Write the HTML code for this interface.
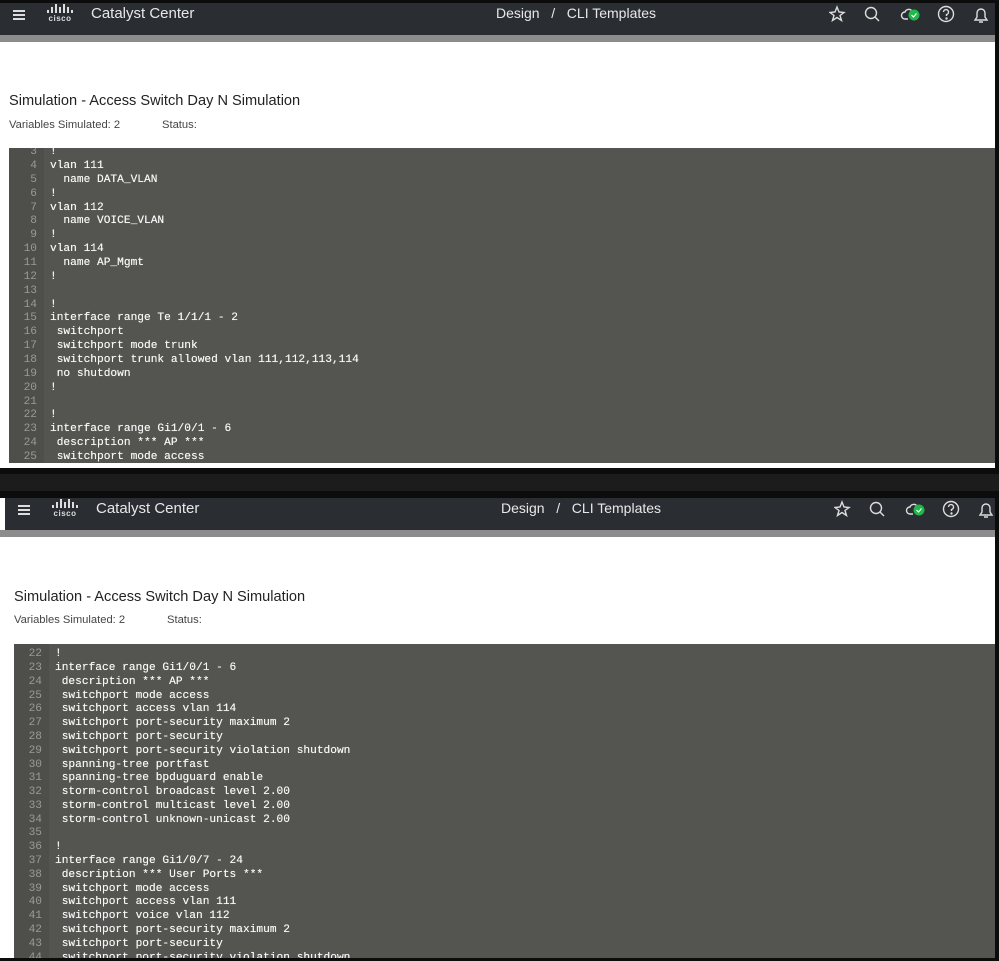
<!DOCTYPE html>
<html><head><meta charset="utf-8"><style>
*{margin:0;padding:0;box-sizing:border-box}
body{width:999px;height:961px;background:#0c0c0c;position:relative;overflow:hidden;font-family:"Liberation Sans",sans-serif}
.panel{position:absolute;background:#fff;overflow:hidden}
.hdr{position:absolute;left:0;right:0;top:0;height:32px;background:#2a2d32;color:#e8e8e8}
.gbar{position:absolute;left:0;right:0;top:32px;height:7px;background:#8c8c8c}
.ham{position:absolute;left:13px;top:7px;width:12px;height:10px;border-top:2px solid #ddd;border-bottom:2px solid #ddd}
.ham:after{content:"";position:absolute;left:0;right:0;top:2px;height:2px;background:#ddd}
.logo{position:absolute;left:45px;top:1px;font-size:8px;font-weight:bold;color:#ddd;text-align:center;width:30px;letter-spacing:.5px}
.logo .bars{display:block;height:10px;position:relative}
.bars i{position:absolute;bottom:1px;width:1.5px;background:#ddd}
.title{position:absolute;left:91px;top:2px;font-size:15px}
.crumb{position:absolute;left:496px;top:2px;font-size:14px}
.h1{position:absolute;font-size:14.6px;color:#222}
.sub{position:absolute;font-size:11.2px;color:#444}
.code{position:absolute;background:#545550;overflow:hidden;font-family:"Liberation Mono",monospace;font-size:11.2px;color:#f6f6f6}
.gut{position:absolute;left:0;top:0;bottom:0;width:35px;background:#4e4f4a}
.ln{position:absolute;left:0;width:100%;height:14px;line-height:14px;white-space:pre;text-shadow:0 0 .4px #fff}
.ln b{font-weight:normal;color:#9a9a96;display:inline-block;width:28px;text-align:right;margin-right:13px;text-shadow:none}
svg{position:absolute}
</style></head><body>

<!-- Panel 1 -->
<div class="panel" style="left:0;top:3px;width:995px;height:465px">
 <div class="hdr"><div class="ham"></div>
  <div class="logo"><span class="bars"><i style="left:2px;height:3px"></i><i style="left:6px;height:6px"></i><i style="left:10px;height:9px"></i><i style="left:14px;height:6px"></i><i style="left:18px;height:9px"></i><i style="left:22px;height:6px"></i><i style="left:26px;height:3px"></i></span>cisco</div>
  <div class="title">Catalyst Center</div>
  <div class="crumb">Design &nbsp;&nbsp;/&nbsp;&nbsp; CLI Templates</div>
  <svg style="left:829px;top:1px" width="160" height="22" viewBox="0 0 160 22" fill="none" stroke="#ddd" stroke-width="1.4">
   <path d="M8 3 L10 8 L15 8.5 L11 11.5 L12.5 16.5 L8 13.5 L3.5 16.5 L5 11.5 L1 8.5 L6 8 Z"/>
   <circle cx="42" cy="9" r="5.5"/><path d="M46 13 L50 17"/>
   <path d="M79 15 H76 a3.5 3.5 0 0 1 0-7 a4 4 0 0 1 7-1"/><circle cx="85" cy="11" r="5.5" fill="#1fb84a" stroke="none"/><path d="M82.5 11 l2 2 l3-3.5" stroke="#fff" stroke-width="1.2"/>
   <circle cx="117" cy="10" r="7.5"/><path d="M114.5 8 a2.5 2.5 0 1 1 3 2.5 v1.5"/><circle cx="117.5" cy="14.5" r=".5" fill="#ddd"/>
   <path d="M146 16 h12 l-2-3 v-4 a4 4 0 0 0-8 0 v4 z M150 18 h4"/>
  </svg>
 </div><div class="gbar"></div>
 <div class="h1" style="left:9px;top:90px">Simulation - Access Switch Day N Simulation</div>
 <div class="sub" style="left:9px;top:116px">Variables Simulated: 2</div>
 <div class="sub" style="left:162px;top:116px">Status:</div>
 <div class="code" style="left:9px;top:145px;width:986px;height:315px"><div class="gut"></div>
  <div class="ln" style="top:-3px"><b>3</b>!</div>
  <div class="ln" style="top:11px"><b>4</b>vlan 111</div>
  <div class="ln" style="top:25px"><b>5</b>  name DATA_VLAN</div>
  <div class="ln" style="top:39px"><b>6</b>!</div>
  <div class="ln" style="top:53px"><b>7</b>vlan 112</div>
  <div class="ln" style="top:66px"><b>8</b>  name VOICE_VLAN</div>
  <div class="ln" style="top:80px"><b>9</b>!</div>
  <div class="ln" style="top:94px"><b>10</b>vlan 114</div>
  <div class="ln" style="top:108px"><b>11</b>  name AP_Mgmt</div>
  <div class="ln" style="top:122px"><b>12</b>!</div>
  <div class="ln" style="top:136px"><b>13</b></div>
  <div class="ln" style="top:150px"><b>14</b>!</div>
  <div class="ln" style="top:163px"><b>15</b>interface range Te 1/1/1 - 2</div>
  <div class="ln" style="top:177px"><b>16</b> switchport</div>
  <div class="ln" style="top:191px"><b>17</b> switchport mode trunk</div>
  <div class="ln" style="top:205px"><b>18</b> switchport trunk allowed vlan 111,112,113,114</div>
  <div class="ln" style="top:219px"><b>19</b> no shutdown</div>
  <div class="ln" style="top:233px"><b>20</b>!</div>
  <div class="ln" style="top:247px"><b>21</b></div>
  <div class="ln" style="top:260px"><b>22</b>!</div>
  <div class="ln" style="top:274px"><b>23</b>interface range Gi1/0/1 - 6</div>
  <div class="ln" style="top:288px"><b>24</b> description *** AP ***</div>
  <div class="ln" style="top:302px"><b>25</b> switchport mode access</div>
 </div>
</div>
<div style="position:absolute;left:0;top:474px;width:999px;height:17px;background:#1c1c1c"></div>

<!-- Panel 2 -->
<div class="panel" style="left:0;top:498px;width:995px;height:460px">
 <div class="hdr" style="left:5px"><div class="ham"></div>
  <div class="logo"><span class="bars"><i style="left:2px;height:3px"></i><i style="left:6px;height:6px"></i><i style="left:10px;height:9px"></i><i style="left:14px;height:6px"></i><i style="left:18px;height:9px"></i><i style="left:22px;height:6px"></i><i style="left:26px;height:3px"></i></span>cisco</div>
  <div class="title">Catalyst Center</div>
  <div class="crumb">Design &nbsp;&nbsp;/&nbsp;&nbsp; CLI Templates</div>
  <svg style="left:829px;top:1px" width="160" height="22" viewBox="0 0 160 22" fill="none" stroke="#ddd" stroke-width="1.4">
   <path d="M8 3 L10 8 L15 8.5 L11 11.5 L12.5 16.5 L8 13.5 L3.5 16.5 L5 11.5 L1 8.5 L6 8 Z"/>
   <circle cx="42" cy="9" r="5.5"/><path d="M46 13 L50 17"/>
   <path d="M79 15 H76 a3.5 3.5 0 0 1 0-7 a4 4 0 0 1 7-1"/><circle cx="85" cy="11" r="5.5" fill="#1fb84a" stroke="none"/><path d="M82.5 11 l2 2 l3-3.5" stroke="#fff" stroke-width="1.2"/>
   <circle cx="117" cy="10" r="7.5"/><path d="M114.5 8 a2.5 2.5 0 1 1 3 2.5 v1.5"/><circle cx="117.5" cy="14.5" r=".5" fill="#ddd"/>
   <path d="M146 16 h12 l-2-3 v-4 a4 4 0 0 0-8 0 v4 z M150 18 h4"/>
  </svg>
 </div><div class="gbar"></div>
 <div class="h1" style="left:14px;top:91px">Simulation - Access Switch Day N Simulation</div>
 <div class="sub" style="left:14px;top:116px">Variables Simulated: 2</div>
 <div class="sub" style="left:167px;top:116px">Status:</div>
 <div class="code" style="left:14px;top:146px;width:981px;height:314px"><div class="gut"></div>
  <div class="ln" style="top:3px"><b>22</b>!</div>
  <div class="ln" style="top:17px"><b>23</b>interface range Gi1/0/1 - 6</div>
  <div class="ln" style="top:31px"><b>24</b> description *** AP ***</div>
  <div class="ln" style="top:45px"><b>25</b> switchport mode access</div>
  <div class="ln" style="top:58px"><b>26</b> switchport access vlan 114</div>
  <div class="ln" style="top:72px"><b>27</b> switchport port-security maximum 2</div>
  <div class="ln" style="top:86px"><b>28</b> switchport port-security</div>
  <div class="ln" style="top:100px"><b>29</b> switchport port-security violation shutdown</div>
  <div class="ln" style="top:114px"><b>30</b> spanning-tree portfast</div>
  <div class="ln" style="top:127px"><b>31</b> spanning-tree bpduguard enable</div>
  <div class="ln" style="top:141px"><b>32</b> storm-control broadcast level 2.00</div>
  <div class="ln" style="top:155px"><b>33</b> storm-control multicast level 2.00</div>
  <div class="ln" style="top:169px"><b>34</b> storm-control unknown-unicast 2.00</div>
  <div class="ln" style="top:182px"><b>35</b></div>
  <div class="ln" style="top:196px"><b>36</b>!</div>
  <div class="ln" style="top:210px"><b>37</b>interface range Gi1/0/7 - 24</div>
  <div class="ln" style="top:224px"><b>38</b> description *** User Ports ***</div>
  <div class="ln" style="top:238px"><b>39</b> switchport mode access</div>
  <div class="ln" style="top:251px"><b>40</b> switchport access vlan 111</div>
  <div class="ln" style="top:265px"><b>41</b> switchport voice vlan 112</div>
  <div class="ln" style="top:279px"><b>42</b> switchport port-security maximum 2</div>
  <div class="ln" style="top:293px"><b>43</b> switchport port-security</div>
  <div class="ln" style="top:307px"><b>44</b> switchport port-security violation shutdown</div>
 </div>
</div>
</body></html>
